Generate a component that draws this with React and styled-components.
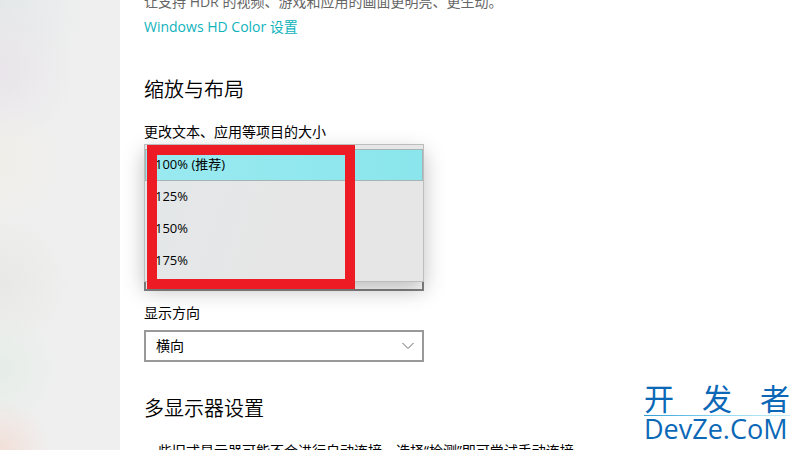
import React, { useState } from "react";
import styled, { createGlobalStyle } from "styled-components";

const scales = ["100% (推荐)", "125%", "150%", "175%"];
const orientations = ["横向", "纵向", "横向(翻转)", "纵向(翻转)"];

const App = () => {
  const [scale, setScale] = useState(scales[0]);
  const [orientation, setOrientation] = useState(orientations[0]);

  return (
    <>
      <GlobalStyle />
      <Window>
        <Sidebar />
        <Content>
          <Note>让支持 HDR 的视频、游戏和应用的画面更明亮、更生动。</Note>
          <SettingsLink href="#hd-color">Windows HD Color 设置</SettingsLink>
          <Title>缩放与布局</Title>
          <Label id="scale-label">更改文本、应用等项目的大小</Label>
          <Picker>
            <PickerField aria-labelledby="scale-label" />
            <Menu role="listbox" aria-labelledby="scale-label">
              {scales.map((item) => (
                <Option
                  key={item}
                  role="option"
                  aria-selected={item === scale}
                  $active={item === scale}
                  onClick={() => setScale(item)}
                >
                  {item}
                </Option>
              ))}
            </Menu>
            <Marker />
          </Picker>
          <OrientationLabel as="label" htmlFor="orientation">
            显示方向
          </OrientationLabel>
          <SelectBox>
            <Select
              id="orientation"
              value={orientation}
              onChange={(e) => setOrientation(e.target.value)}
            >
              {orientations.map((item) => (
                <option key={item}>{item}</option>
              ))}
            </Select>
            <Chevron viewBox="0 0 12 8" aria-hidden="true">
              <path d="M0.5 1L6 6.5L11.5 1" />
            </Chevron>
          </SelectBox>
          <Title $second>多显示器设置</Title>
          <Hint>
            一些旧式显示器可能不会进行自动连接，选择“检测”即可尝试手动连接。
          </Hint>
        </Content>
        <Watermark>
          <WatermarkName>
            <span>开</span>
            <span>发</span>
            <span>者</span>
          </WatermarkName>
          <WatermarkLine />
          <WatermarkSite>DevZe.CoM</WatermarkSite>
        </Watermark>
      </Window>
    </>
  );
};

const GlobalStyle = createGlobalStyle`
  * {
    box-sizing: border-box;
    margin: 0;
    padding: 0;
  }
  body {
    background: white;
    color: black;
    font-family: "Open Sans", "Noto Sans CJK SC", sans-serif;
    font-size: 14px;
    line-height: 20px;
    overflow: hidden;
  }
  button,
  select {
    font: inherit;
    color: inherit;
  }
`;
const Window = styled.div`
  display: flex;
  height: 100vh;
  overflow: hidden;
  position: relative;
`;
const Sidebar = styled.aside`
  flex: 0 0 120px;
  background:
    radial-gradient(circle at 0 100%, #f2dfd8 0, transparent 50px),
    radial-gradient(circle at 0 82%, #e5ede8 0, transparent 60px),
    radial-gradient(circle at 0 63%, #e8e8e6 0, transparent 70px),
    radial-gradient(circle at 0 36%, #f0eee8 0, transparent 60px),
    radial-gradient(circle at 0 16%, #e9e5ea 0, transparent 75px),
    radial-gradient(circle at 0 0, #e4e8e9 0, transparent 90px),
    #efefef;
`;
/* the pane is scrolled, so its first line is cut by the window edge */
const Content = styled.main`
  flex: 1;
  display: flex;
  flex-direction: column;
  align-items: flex-start;
  margin-top: -8px;
  padding: 0 24px;
  white-space: nowrap;
`;
const Note = styled.p`
  color: #666;
`;
const SettingsLink = styled.a`
  margin-top: 5px;
  color: #0fb3bc;
  text-decoration: none;
`;
const Title = styled.h2`
  margin-top: ${({ $second }) => ($second ? "33px" : "39px")};
  font-size: 20px;
  font-weight: 350;
  line-height: 28px;
`;
const Label = styled.span`
  margin-top: 18px;
`;
const OrientationLabel = styled(Label)`
  margin-top: 12px;
`;
const Picker = styled.div`
  position: relative;
  display: flex;
  align-items: flex-end;
  width: 100%;
  max-width: 280px;
  min-height: 147px;
  margin-top: 2px;
`;
const PickerField = styled.button`
  width: 100%;
  height: 32px;
  background: white;
  border: 2px solid #848484;
`;
const Menu = styled.div`
  position: absolute;
  top: 0;
  left: 0;
  right: 0;
  display: flex;
  flex-direction: column;
  padding: 4px 0;
  background: linear-gradient(110deg, #e3e7e9, #e6e6e6 50%);
  border: 1px solid #bdbdbd;
  box-shadow: 0 8px 20px rgba(0, 0, 0, 0.26);
`;
const Option = styled.button`
  height: 32px;
  padding: 0 9px 2px;
  text-align: left;
  font-size: 13px;
  line-height: 20px;
  border: 1px solid ${({ $active }) => ($active ? "#a5b4b5" : "transparent")};
  background: ${({ $active }) =>
    $active ? "linear-gradient(90deg, #9aeaf0, #8ae6ec)" : "transparent"};
`;
const Marker = styled.div`
  position: absolute;
  top: 1px;
  left: 3px;
  width: 208px;
  height: 144px;
  border: 10px solid #ed1c24;
  pointer-events: none;
`;
const SelectBox = styled.div`
  display: grid;
  align-items: center;
  width: 100%;
  max-width: 280px;
  margin-top: 7px;
`;
const Select = styled.select`
  grid-area: 1 / 1;
  appearance: none;
  width: 100%;
  height: 32px;
  padding: 0 10px;
  background: white;
  border: 2px solid #999;
  border-radius: 0;
`;
const Chevron = styled.svg`
  grid-area: 1 / 1;
  justify-self: end;
  width: 12px;
  height: 8px;
  margin-right: 10px;
  pointer-events: none;
  fill: none;
  stroke: #666;
`;
const Hint = styled.p`
  margin-top: 18px;
`;
const Watermark = styled.div`
  position: absolute;
  right: 10px;
  bottom: 4px;
  width: 146px;
  color: #0b68b7;
`;
const WatermarkName = styled.div`
  display: flex;
  justify-content: space-between;
  font-size: 30px;
  line-height: 32px;
`;
const WatermarkLine = styled.div`
  height: 1px;
  background: linear-gradient(90deg, #2b9bd6, #8ed8f2 50%, #c5ecf8);
`;
const WatermarkSite = styled.div`
  font-size: 27px;
  line-height: 26px;
  padding-bottom: 4px;
`;

export default App;
